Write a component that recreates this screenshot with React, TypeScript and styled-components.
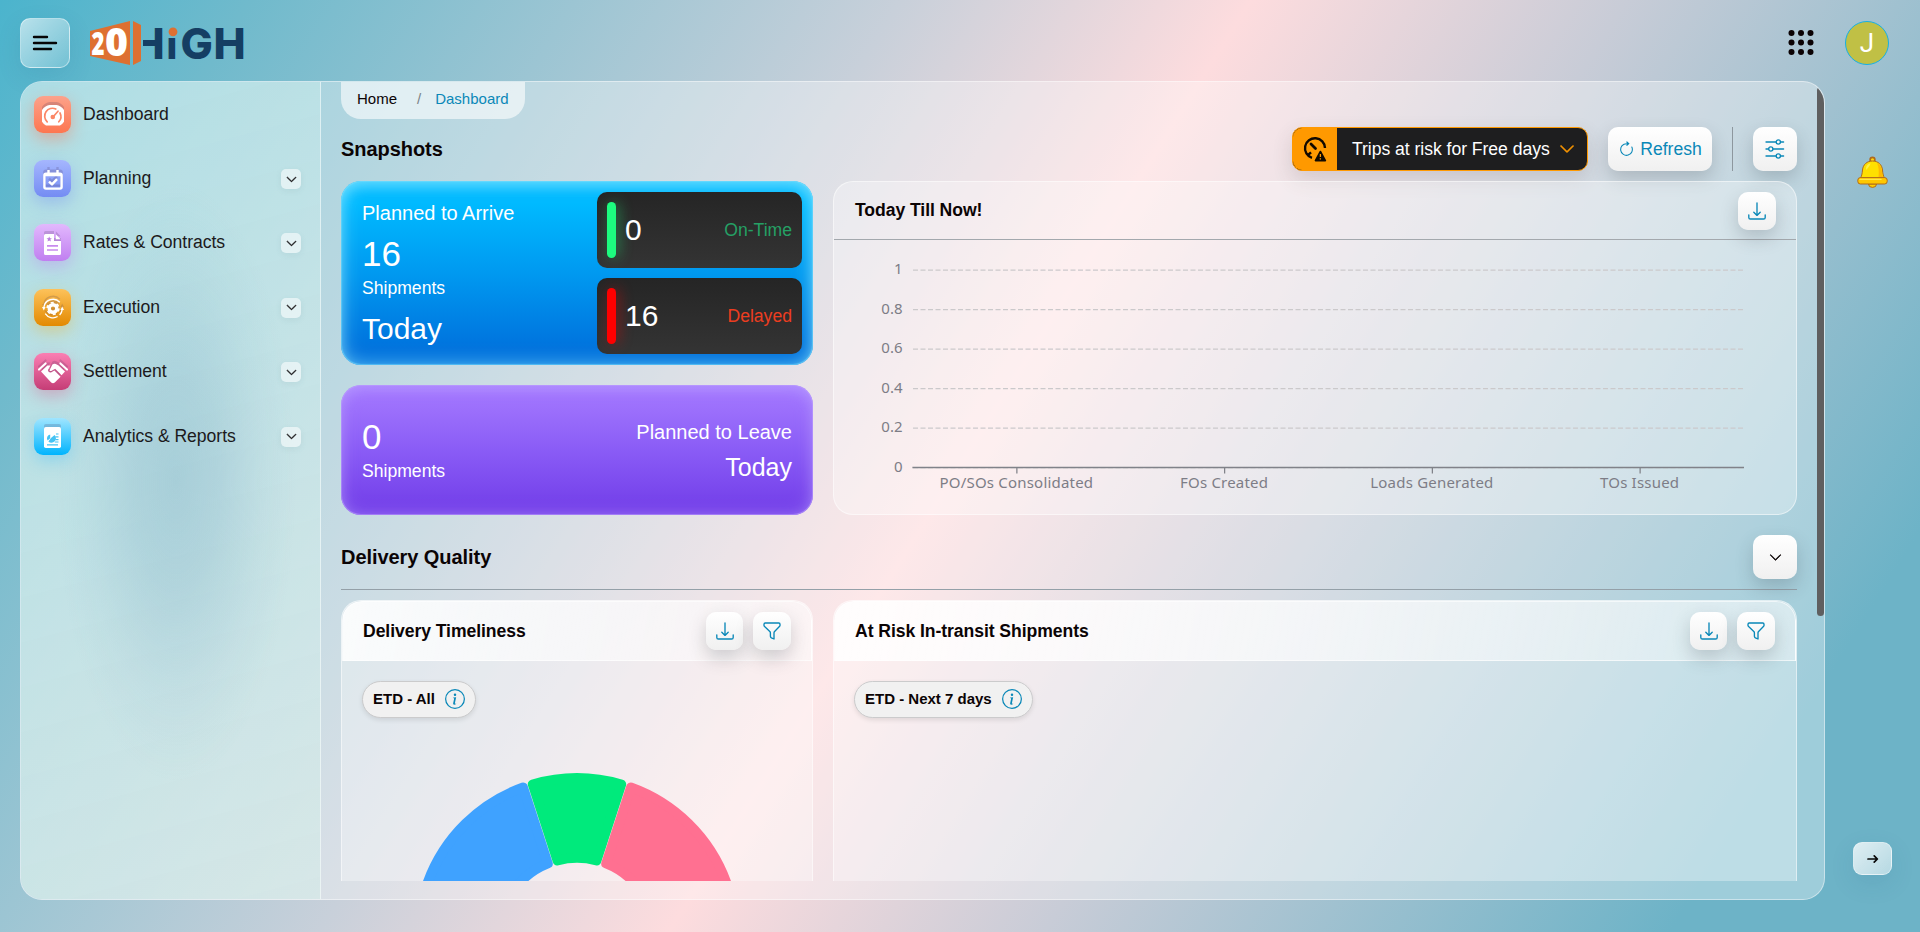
import React from "react";
import styled, { createGlobalStyle, css } from "styled-components";
import { BsArrowClockwise, BsChevronDown, BsInfoCircle } from "react-icons/bs";

const Global = createGlobalStyle`
  * { box-sizing: border-box; }
  html, body { margin: 0; }
  body {
    width: 100vw;
    height: 100vh;
    overflow: hidden;
    font-family: "Liberation Sans", Arial, sans-serif;
    color: #0b0405;
  }
`;

const accent = "#0a88b8";

const Page = styled.div`
  width: 1920px;
  height: 932px;
  display: flex;
  flex-direction: column;
  background: linear-gradient(122deg, #4bb4cd 0%, #70bacc 10%, #c8d0da 36%, #fddcde 50%, #c8ccd7 65%, #6db3c7 90%);
`;

const TopBar = styled.header`
  height: 81px;
  padding: 18px 31px 0 20px;
  display: flex;
  align-items: flex-start;
`;

const glassButton = css`
  display: grid;
  place-items: center;
  border: 1px solid rgba(255, 255, 255, 0.45);
  background: linear-gradient(135deg, rgba(255, 255, 255, 0.6), rgba(255, 255, 255, 0.15));
  box-shadow: 0 8px 24px rgba(31, 90, 135, 0.12);
`;

const MenuButton = styled.button`
  ${glassButton}
  width: 50px;
  height: 50px;
  padding: 0;
  border-radius: 10px;
`;

const LogoBox = styled.div`
  margin: 2px 0 0 19px;
  height: 46px;
  svg { overflow: visible; }
`;

const TopActions = styled.div`
  margin-left: auto;
  display: flex;
  align-items: center;
  gap: 31px;
  padding-top: 3px;
`;

const Avatar = styled.div`
  width: 44px;
  height: 44px;
  border-radius: 50%;
  border: 1px solid #17b0e4;
  background: #c0c045;
  color: #fff;
  display: grid;
  place-items: center;
  font: 400 26px Roboto, sans-serif;
`;

const Body = styled.div`
  display: flex;
  height: 819px;
  padding-left: 20px;
`;

const Panel = styled.div`
  width: 1805px;
  display: flex;
  border: 1px solid rgba(255, 255, 255, 0.45);
  border-radius: 22px;
  background: rgba(255, 255, 255, 0.34);
  overflow: hidden;
`;

const Sidebar = styled.nav`
  width: 300px;
  flex: none;
  padding: 0 19px 0 13px;
  border-right: 1px solid rgba(255, 255, 255, 0.5);
  background:
    radial-gradient(ellipse 120px 300px at 155px 400px, rgba(110, 165, 190, 0.32), rgba(110, 165, 190, 0.24) 35%, rgba(110, 165, 190, 0.08) 72%, rgba(110, 165, 190, 0) 100%),
    linear-gradient(165deg, rgba(200, 236, 236, 0.52), rgba(213, 236, 232, 0.6));
`;

const NavItem = styled.a`
  height: 64.4px;
  display: flex;
  align-items: center;
  gap: 12px;
  font-size: 17.6px;
  color: #1c1a1c;
`;

const NavLabel = styled.span`
  flex: 1;
  letter-spacing: -0.04px;
`;

const NavIcon = styled.span<{ $from: string; $to: string; $glow: string }>`
  width: 37px;
  height: 37px;
  border-radius: 9px;
  display: grid;
  place-items: center;
  color: #fff;
  background: linear-gradient(${(p) => p.$from}, ${(p) => p.$to});
  box-shadow: 0 6px 16px ${(p) => p.$glow};
  svg { margin-top: 3px; filter: drop-shadow(0 -3px 0 rgba(70, 50, 90, 0.2)); }
`;

const NavToggle = styled.span`
  width: 20px;
  height: 20px;
  margin-top: 1px;
  border-radius: 5px;
  display: grid;
  place-items: center;
  background: rgba(255, 255, 255, 0.55);
  box-shadow: 0 2px 6px rgba(60, 100, 120, 0.08);
  svg { stroke: currentColor; stroke-width: 1; }
`;

const Content = styled.main`
  width: 1496px;
  height: 799px;
  padding: 0 20px;
  overflow: hidden;
`;

const Track = styled.div`
  width: 7px;
  padding-top: 5px;
`;

const Thumb = styled.div`
  height: 529px;
  border-radius: 4px;
  background: #5f5f60;
`;

const Crumbs = styled.div`
  width: 184px;
  height: 37px;
  padding: 8px 16px 0;
  display: flex;
  font-size: 15px;
  line-height: 17px;
  border-radius: 0 0 20px 20px;
  background: rgba(255, 255, 255, 0.6);
`;

const CrumbSlash = styled.span`
  margin: 0 14px 0 20px;
  color: #7c8488;
`;

const CrumbHere = styled.span`
  color: ${accent};
`;

const HeadRow = styled.div`
  display: flex;
  align-items: center;
  justify-content: space-between;
  height: 44px;
  margin-top: 8px;
`;

const Heading = styled.h2`
  margin: 0;
  font-size: 20px;
  line-height: 24px;
  font-weight: 700;
  letter-spacing: -0.06px;
`;

const Tools = styled.div`
  display: flex;
  gap: 20px;
  height: 44px;
`;

const RiskPill = styled.div`
  width: 296px;
  display: flex;
  align-items: center;
  border: 1px solid #ff9900;
  border-radius: 10px;
  overflow: hidden;
  background: #1e1e1f;
  color: #fff;
  font-size: 17.6px;
  box-shadow: 0 8px 20px rgba(80, 60, 60, 0.16);
`;

const RiskIcon = styled.span`
  width: 44px;
  height: 44px;
  background: #ff9900;
  display: grid;
  place-items: center;
`;

const RiskText = styled.span`
  margin: 0 9px 0 15px;
  white-space: nowrap;
  letter-spacing: -0.04px;
`;

const RiskChevron = styled.span`
  color: #ff9900;
  display: flex;
  svg { stroke: currentColor; stroke-width: 0.7; }
`;

const WhiteButton = styled.button<{ $w: number; $h: number }>`
  width: ${(p) => p.$w}px;
  height: ${(p) => p.$h}px;
  flex: none;
  padding: 0;
  border: 0;
  border-radius: 10px;
  display: flex;
  align-items: center;
  justify-content: center;
  gap: 5px;
  font: 17.6px "Liberation Sans", Arial, sans-serif;
  color: ${accent};
  background: linear-gradient(#ffffff, #f0f0f0);
  box-shadow: 0 8px 18px rgba(50, 60, 70, 0.22);
`;

const Divider = styled.span`
  width: 1px;
  background: #8d979e;
`;

const Snapshots = styled.section`
  display: grid;
  grid-template-columns: 472px 964px;
  column-gap: 20px;
  margin-top: 10px;
  height: 334px;
`;

const Stack = styled.div`
  display: flex;
  flex-direction: column;
  gap: 20px;
`;

const ArriveCard = styled.div`
  height: 184px;
  padding: 11px;
  padding-left: 21px;
  display: flex;
  justify-content: space-between;
  color: #fff;
  border-radius: 20px;
  background: linear-gradient(#00baff 12%, #0099f0 50%, #0072dd 92%);
  box-shadow: inset 0 0 20px rgba(150, 235, 255, 0.6), inset 0 6px 12px rgba(150, 235, 255, 0.4), inset 0 0 1px 1px rgba(90, 205, 250, 0.6);
`;

const LeaveCard = styled.div`
  height: 130px;
  padding: 0 21px;
  display: flex;
  justify-content: space-between;
  color: #fff;
  border-radius: 20px;
  background: linear-gradient(#a67bff, #8a5cf6 50%, #733fe9 95%);
  box-shadow: inset 0 0 18px rgba(190, 165, 255, 0.45), inset 0 4px 12px rgba(190, 165, 255, 0.35), inset 0 0 0 1px rgba(190, 160, 255, 0.5);
`;

const Lines = styled.div<{ $top: number; $right?: boolean }>`
  padding-top: ${(p) => p.$top}px;
  text-align: ${(p) => (p.$right ? "right" : "left")};
`;

const Line = styled.div<{ $size: number; $lh: number }>`
  font-size: ${(p) => p.$size}px;
  line-height: ${(p) => p.$lh}px;
`;

const StatusStack = styled.div`
  display: flex;
  flex-direction: column;
  gap: 10px;
`;

const StatusBox = styled.div`
  width: 205px;
  height: 76px;
  padding: 0 10px;
  display: flex;
  align-items: center;
  border-radius: 10px;
  background: linear-gradient(#252525, #343434);
`;

const StatusBar = styled.span<{ $c: string }>`
  width: 9px;
  height: 56px;
  border-radius: 5px;
  background: ${(p) => p.$c};
  box-shadow: 3px 0 14px ${(p) => p.$c}66;
`;

const StatusCount = styled.span`
  flex: 1;
  padding-left: 9px;
  font-size: 30px;
`;

const StatusLabel = styled.span<{ $c: string }>`
  font-size: 17.6px;
  color: ${(p) => p.$c};
`;

const GlassCard = styled.div<{ $h: number }>`
  height: ${(p) => p.$h}px;
  border: 1px solid rgba(255, 255, 255, 0.5);
  border-radius: 20px;
  background: rgba(255, 255, 255, 0.32);
  overflow: hidden;
`;

const CardHead = styled.div<{ $solid?: boolean }>`
  height: ${(p) => (p.$solid ? 60 : 58)}px;
  padding: 0 20px;
  display: flex;
  align-items: center;
  gap: 10px;
  ${(p) =>
    p.$solid
      ? css`
          background: linear-gradient(100deg, rgba(255, 255, 255, 0.86), rgba(255, 255, 255, 0.35));
          border: 1px solid rgba(255, 255, 255, 0.6);
          border-radius: 20px 20px 0 0;
        `
      : css`
          padding-left: 21px;
          border-bottom: 1px solid #a3a8ad;
        `}
`;

const CardTitle = styled.h3`
  margin: 0 auto 0 0;
  font-size: 17.6px;
  font-weight: 700;
  letter-spacing: -0.07px;
`;

const QualityHead = styled(HeadRow)`
  height: 55px;
  margin-top: 20px;
  align-items: flex-start;
  border-bottom: 1px solid #94a0a8;
  ${Heading} { padding-top: 10px; }
  ${WhiteButton} { color: #0b0405; }
`;

const QualityGrid = styled.section`
  display: grid;
  grid-template-columns: 472px 964px;
  column-gap: 20px;
  margin-top: 10px;
`;

const Chip = styled.div`
  width: max-content;
  height: 37px;
  margin: 20px 0 0 20px;
  padding: 0 10px 2px;
  display: flex;
  align-items: center;
  gap: 10px;
  font-size: 15px;
  font-weight: 700;
  border: 1px solid #cbcbcc;
  border-radius: 19px;
  background: #f1f1f1;
  box-shadow: 0 2px 5px rgba(0, 0, 0, 0.1);
  svg { color: ${accent}; }
`;

const DonutBox = styled.div`
  margin-top: 53.5px;
  display: flex;
  justify-content: center;
`;

const Rail = styled.aside`
  width: 95px;
  padding: 75px 28px 0;
  display: flex;
  flex-direction: column;
  justify-content: space-between;
  align-items: flex-start;
`;

const ArrowButton = styled.button`
  ${glassButton}
  width: 39px;
  height: 33px;
  padding: 0;
  margin-bottom: 25px;
  border-radius: 9px;
  background: linear-gradient(135deg, rgba(255, 255, 255, 0.78), rgba(255, 255, 255, 0.5));
`;

const BellBox = styled.div`
  margin-left: 4px;
  height: 31px;
`;

const Logo = () => (
  <svg width="156" height="46" viewBox="89 20 156 46">
    <path d="M90 31 L130 21 V65 L90 56 Z" fill="#de7031" />
    <path d="M133 21 L141 25 V61 L133 65 Z" fill="#de7031" />
    <clipPath id="crossbar">
      <path d="M143 20 H166 V66 H143 Z" />
    </clipPath>
    <g fontFamily="Open Sans" fontWeight="800" fill="#fff">
      <text x="91.5" y="54.5" fontSize="32" textLength="13" lengthAdjust="spacingAndGlyphs">2</text>
      <text x="105" y="56" fontSize="38" textLength="23" lengthAdjust="spacingAndGlyphs">0</text>
    </g>
    <g fontFamily="Inter" fontWeight="800" fill="#153e63" fontSize="43">
      <text x="132.5" y="58.8" clipPath="url(#crossbar)">H</text>
      <text x="166.5" y="58.8" fontSize="38">ı</text>
      <text x="180.5" y="58.8">G</text>
      <text x="213.5" y="58.8">H</text>
    </g>
    <circle cx="173" cy="31.8" r="4.4" fill="#de7031" />
  </svg>
);

const MenuIcon = () => (
  <svg width="26" height="18" viewBox="0 0 26 18" stroke="#050505" strokeWidth="2.4" strokeLinecap="round">
    <path d="M2 3 H15 M2 9 H24 M2 15 H19" />
  </svg>
);

const AppsIcon = () => (
  <svg width="26" height="26" viewBox="0 0 26 26" fill="#0b0204">
    {[3, 12.5, 22].map((y) => [3.5, 13, 22.5].map((x) => <circle key={`${x}-${y}`} cx={x} cy={y} r="3" />))}
  </svg>
);

const DownloadIcon = () => (
  <svg width="18" height="18" viewBox="0 0 18 18" fill="none" stroke="currentColor" strokeWidth="1.35" strokeLinecap="round" strokeLinejoin="round">
    <path d="M9 1 V13 M5.8 10.2 L9 13.4 L12.2 10.2 M.8 12.8 V15.4 Q.8 17 2.4 17 H15.6 Q17.2 17 17.2 15.4 V12.8" />
  </svg>
);

const FunnelIcon = () => (
  <svg width="18" height="18" viewBox="0 0 18 18" fill="none" stroke="currentColor" strokeWidth="1.35" strokeLinejoin="round">
    <path d="M2.2 1 H15.8 Q17 1 17 2.2 V3.4 Q17 4 16.4 4.6 L11.6 9.4 Q11 10 11 10.8 V17 L8.4 15.8 Q7.4 15.2 7.4 14.2 V10.8 Q7.4 10 6.8 9.4 L1.6 4.6 Q1 4 1 3.4 V2.2 Q1 1 2.2 1 Z" />
  </svg>
);

const SlidersIcon = () => (
  <svg width="20" height="20" viewBox="0 0 20 20" fill="none" stroke="currentColor" strokeWidth="1.3" strokeLinecap="round">
    <path d="M1 3 H11 M15.6 3 H18.6 M1 10 H3.6 M8 10 H18.6 M1 17 H11 M15.6 17 H18.6" />
    <circle cx="13.3" cy="3" r="2.1" />
    <circle cx="5.8" cy="10" r="2.1" />
    <circle cx="13.3" cy="17" r="2.1" />
  </svg>
);

const RiskGauge = () => (
  <svg width="24" height="26" viewBox="0 0 24 26" fill="none" stroke="#120a00" strokeWidth="2.4">
    <path d="M9 21.8 A10 10 0 1 1 22 12" />
    <path d="M8 8 L12.5 12.5" strokeWidth="2.8" strokeLinecap="round" />
    <path d="M5 19 L8 16.4" />
    <path d="M17.4 15.5 L22.4 24.6 H12.4 Z" fill="#120a00" strokeWidth="1.6" strokeLinejoin="round" />
    <path d="M17.4 18 V21 M17.4 22.2 V23.4" stroke="#ff9900" strokeWidth="1.3" />
  </svg>
);

const GaugeIcon = () => (
  <svg width="22" height="21" viewBox="0 0 22 21">
    <path d="M11 0 A11 11 0 0 1 18 20.5 H4 A11 11 0 0 1 11 0 Z" fill="#fff" />
    <g fill="none" stroke="#fb8767" strokeWidth="1.7" strokeLinecap="round">
      <path d="M5.2 16.8 A7.8 7.8 0 0 1 13.8 4" />
      <path d="M18 8 A7.8 7.8 0 0 1 16.8 16.8" />
      <path d="M11 12 L16 6.2" />
    </g>
    <circle cx="10.8" cy="12" r="2.3" fill="#fb8767" />
  </svg>
);

const CalendarIcon = () => (
  <svg width="20" height="20" viewBox="0 0 20 20" fill="none" stroke="#fff" strokeWidth="2.4" strokeLinejoin="round">
    <rect x="1.4" y="3.6" width="17.2" height="15" rx="1.6" />
    <path d="M5.5 0 V6 M14.5 0 V6 M1.4 5 H18.6" />
    <path d="M6 11.6 L9 14.4 L14 9.2" />
  </svg>
);

const ContractIcon = () => (
  <svg width="17" height="21" viewBox="0 0 17 21">
    <path d="M1.5 0 H10 V7 H17 V19.5 Q17 21 15.5 21 H1.5 Q0 21 0 19.5 V1.5 Q0 0 1.5 0 Z M11.8 .3 L16.6 5.2 H11.8 Z" fill="#fff" />
    <path d="M5.2 2.4 L6 4.2 L7.9 4.3 L6.4 5.6 L6.9 7.5 L5.2 6.4 L3.5 7.5 L4 5.6 L2.5 4.3 L4.4 4.2 Z" fill="#b87ee0" />
    <path d="M3 11.8 H14 M3 16 H14" stroke="#c78bee" strokeWidth="1.7" />
  </svg>
);

const ExecutionIcon = () => (
  <svg width="22" height="21" viewBox="0 0 22 21" fill="none" stroke="#fff">
    <path d="M1.8 9.5 A9.3 9.3 0 0 1 17.8 4.2 M20.2 11.5 A9.3 9.3 0 0 1 17.6 17" strokeWidth="1.4" />
    <path d="M3.2 15.6 A9.3 9.3 0 0 0 15.6 18.6" strokeWidth="1.2" />
    <circle cx="11" cy="10.5" r="3.8" strokeWidth="3.4" />
    <circle cx="11" cy="10.5" r="5.9" strokeWidth="1.6" strokeDasharray="3.1 3.08" />
    <path d="M0 9 H3.6 L1.8 12.4 Z M18.4 12 H22 L20.2 8.6 Z" fill="#fff" stroke="none" />
  </svg>
);

const HandshakeIcon = () => (
  <svg width="30" height="22" viewBox="0 0 30 22" fill="none" stroke="#fff" strokeLinecap="round">
    <path d="M1 7.6 L7.6 1.4 M29 7.6 L22.4 1.4" strokeWidth="2" />
    <path
      d="M3 9.6 L9.4 3.4 H12.4 L10 8 Q10 10.6 13 10.4 L16.4 8.6 L22.6 14.8 L16.8 20.4 Q15 22 13.2 20.4 Z"
      fill="#fff"
      stroke="none"
    />
    <path
      d="M14.4 2.4 Q16 1.6 17.8 2 L20.6 3.4 L27 9.6 L23.6 13.2 L17.2 6.8 L13.2 9 Q11.6 9.4 11.6 8.2 Z"
      fill="#fff"
      stroke="none"
    />
  </svg>
);

const ReportIcon = () => (
  <svg width="17" height="21" viewBox="0 0 17 21">
    <rect width="17" height="21" rx="1.8" fill="#fff" />
    <path d="M6.2 7.5 V11.3 L3.6 13.6 A4 4 0 0 1 6.2 7.5 Z M7 11 L10.6 8 A4 4 0 0 1 4.4 14.4 Z" fill="#45c3f4" />
    <path d="M12 7 H14.5 M11.5 9.8 H14.5 M11.5 12.6 H14.5 M10.8 15 H14.5 M3 17.8 H14" stroke="#45c3f4" strokeWidth="1.2" />
  </svg>
);

const Bell = () => (
  <svg width="31" height="32" viewBox="0 0 31 32" strokeLinejoin="round">
    <circle cx="15.5" cy="3.8" r="2.4" fill="#ffd60a" stroke="#b06a1c" strokeWidth="1.6" />
    <path d="M11.5 28 a4 3.4 0 0 0 8 0 Z" fill="#ffd000" stroke="#b06a1c" />
    <path d="M15.5 5 C21 5 25 8.5 25.5 14 C25.8 18 26.5 20.5 27.6 22 H3.4 C4.5 20.5 5.2 18 5.5 14 C6 8.5 10 5 15.5 5 Z" fill="#ffe000" stroke="#b06a1c" />
    <path d="M20 7 C23.5 9 24.6 11.5 24.8 15 C25 18 25.6 20 26.5 21.4 H21.5 C22 16 22 11 20 7 Z" fill="#ffb900" />
    <path d="M9.2 11 C10 8.6 11.5 7.6 13.5 7.2 C13 9.5 11.5 11.5 9 14 Z" fill="#fff04a" />
    <rect x=".8" y="21.6" width="29.4" height="6.4" rx="2.6" fill="#ffc800" stroke="#b06a1c" />
    <path d="M3 23.4 H24" stroke="#ffe84a" strokeWidth="1.4" strokeLinecap="round" />
  </svg>
);

const ArrowIcon = () => (
  <svg width="12" height="10" viewBox="0 0 12 10" fill="none" stroke="#080808" strokeWidth="1.7" strokeLinecap="round" strokeLinejoin="round">
    <path d="M1 5 H10.2 M7.2 1.8 L10.4 5 L7.2 8.2" />
  </svg>
);

const plot = { left: 79, right: 910, top: 30, base: 227.5 };
const categories = ["PO/SOs Consolidated", "FOs Created", "Loads Generated", "TOs Issued"];

const BarChart = () => {
  const step = (plot.base - plot.top) / 5;
  const band = (plot.right - plot.left) / categories.length;
  return (
    <svg width="962" height="274" fontFamily="Noto Sans" fontSize="15" fill="#7d7d86">
      {["0", "0.2", "0.4", "0.6", "0.8", "1"].map((label, i) => {
        const y = plot.base - i * step;
        return (
          <g key={label}>
            <text x="68.5" y={y + 4} textAnchor="end">{label}</text>
            <path d={`M${plot.left} ${y} H${plot.right}`} stroke="#cbc9cb" strokeWidth="1.25" strokeDasharray="5 2.5" />
          </g>
        );
      })}
      <path d={`M${plot.left - 0.6} ${plot.base} H${plot.right}`} stroke="#808289" strokeWidth="1.4" />
      {categories.map((name, i) => {
        const x = plot.left + band * (i + 0.5);
        return (
          <g key={name}>
            <path d={`M${x} ${plot.base} v6`} stroke="#808289" strokeWidth="1.25" />
            <text x={x - 0.5} y="248" textAnchor="middle" letterSpacing="0.2">{name}</text>
          </g>
        );
      })}
    </svg>
  );
};

const slice = (from: number, to: number, outer: number, inner: number, round: number) => {
  const at = (deg: number, r: number, side: number) => {
    const a = (deg * Math.PI) / 180 + side * Math.asin(round / r);
    return `${(165 + r * Math.sin(a)).toFixed(2)} ${(165 - r * Math.cos(a)).toFixed(2)}`;
  };
  const ro = outer - round;
  const ri = inner + round;
  return `M${at(from, ro, 1)} A${ro} ${ro} 0 0 1 ${at(to, ro, -1)} L${at(to, ri, -1)} A${ri} ${ri} 0 0 0 ${at(from, ri, 1)} Z`;
};

const slices = [
  { from: -126, to: -18, color: "#3fa2ff" },
  { from: -18, to: 18, color: "#00ea7c" },
  { from: 18, to: 126, color: "#ff7091" },
];

const Donut = () => (
  <svg width="330" height="330">
    {slices.map((s) => (
      <path key={s.color} d={slice(s.from, s.to, 164, 74, 5)} fill={s.color} stroke={s.color} strokeWidth="9.7" strokeLinejoin="round" />
    ))}
  </svg>
);

const nav = [
  { label: "Dashboard", icon: <GaugeIcon />, from: "#fca28b", to: "#fd7650", glow: "rgba(253,118,80,.45)" },
  { label: "Planning", icon: <CalendarIcon />, from: "#a5b6fe", to: "#748cf3", glow: "rgba(116,140,243,.4)", open: true },
  { label: "Rates & Contracts", icon: <ContractIcon />, from: "#e2b8fd", to: "#c07ff0", glow: "rgba(192,127,240,.4)", open: true },
  { label: "Execution", icon: <ExecutionIcon />, from: "#fdc25a", to: "#e38900", glow: "rgba(240,180,40,.4)", open: true },
  { label: "Settlement", icon: <HandshakeIcon />, from: "#fb7fb3", to: "#c53d76", glow: "rgba(220,90,140,.4)", open: true },
  { label: "Analytics & Reports", icon: <ReportIcon />, from: "#a0e5ff", to: "#00b4fd", glow: "rgba(60,190,250,.35)", open: true },
];

const QualityCard = ({ title, chip, children }: { title: string; chip: string; children?: React.ReactNode }) => (
  <GlassCard $h={500}>
    <CardHead $solid>
      <CardTitle>{title}</CardTitle>
      <WhiteButton $w={37} $h={38}><DownloadIcon /></WhiteButton>
      <WhiteButton $w={38} $h={38}><FunnelIcon /></WhiteButton>
    </CardHead>
    <Chip>
      {chip}
      <BsInfoCircle size={20} />
    </Chip>
    {children}
  </GlassCard>
);

export default function App() {
  return (
    <Page>
      <Global />
      <TopBar>
        <MenuButton><MenuIcon /></MenuButton>
        <LogoBox><Logo /></LogoBox>
        <TopActions>
          <AppsIcon />
          <Avatar>J</Avatar>
        </TopActions>
      </TopBar>
      <Body>
        <Panel>
          <Sidebar>
            {nav.map((item) => (
              <NavItem key={item.label}>
                <NavIcon $from={item.from} $to={item.to} $glow={item.glow}>{item.icon}</NavIcon>
                <NavLabel>{item.label}</NavLabel>
                {item.open && <NavToggle><BsChevronDown size={11} /></NavToggle>}
              </NavItem>
            ))}
          </Sidebar>
          <Content>
            <Crumbs>
              <span>Home</span>
              <CrumbSlash>/</CrumbSlash>
              <CrumbHere>Dashboard</CrumbHere>
            </Crumbs>
            <HeadRow>
              <Heading>Snapshots</Heading>
              <Tools>
                <RiskPill>
                  <RiskIcon><RiskGauge /></RiskIcon>
                  <RiskText>Trips at risk for Free days</RiskText>
                  <RiskChevron><BsChevronDown size={16} /></RiskChevron>
                </RiskPill>
                <WhiteButton $w={104} $h={44}><BsArrowClockwise size={17} />Refresh</WhiteButton>
                <Divider />
                <WhiteButton $w={44} $h={44}><SlidersIcon /></WhiteButton>
              </Tools>
            </HeadRow>
            <Snapshots>
              <Stack>
                <ArriveCard>
                  <Lines $top={9}>
                    <Line $size={20} $lh={24}>Planned to Arrive</Line>
                    <Line $size={35} $lh={58}>16</Line>
                    <Line $size={17.6} $lh={11}>Shipments</Line>
                    <Line $size={30} $lh={70}>Today</Line>
                  </Lines>
                  <StatusStack>
                    <StatusBox>
                      <StatusBar $c="#1dfc7f" />
                      <StatusCount>0</StatusCount>
                      <StatusLabel $c="#25a065">On-Time</StatusLabel>
                    </StatusBox>
                    <StatusBox>
                      <StatusBar $c="#ff0000" />
                      <StatusCount>16</StatusCount>
                      <StatusLabel $c="#ec3d20">Delayed</StatusLabel>
                    </StatusBox>
                  </StatusStack>
                </ArriveCard>
                <LeaveCard>
                  <Lines $top={29}>
                    <Line $size={35} $lh={46}>0</Line>
                    <Line $size={17.6} $lh={22}>Shipments</Line>
                  </Lines>
                  <Lines $top={34} $right>
                    <Line $size={20} $lh={26}>Planned to Leave</Line>
                    <Line $size={25} $lh={45}>Today</Line>
                  </Lines>
                </LeaveCard>
              </Stack>
              <GlassCard $h={334}>
                <CardHead>
                  <CardTitle>Today Till Now!</CardTitle>
                  <WhiteButton $w={38} $h={38}><DownloadIcon /></WhiteButton>
                </CardHead>
                <BarChart />
              </GlassCard>
            </Snapshots>
            <QualityHead>
              <Heading>Delivery Quality</Heading>
              <WhiteButton $w={44} $h={44}><BsChevronDown size={13} strokeWidth={0.8} /></WhiteButton>
            </QualityHead>
            <QualityGrid>
              <QualityCard title="Delivery Timeliness" chip="ETD - All">
                <DonutBox><Donut /></DonutBox>
              </QualityCard>
              <QualityCard title="At Risk In-transit Shipments" chip="ETD - Next 7 days" />
            </QualityGrid>
          </Content>
          <Track><Thumb /></Track>
        </Panel>
        <Rail>
          <BellBox><Bell /></BellBox>
          <ArrowButton><ArrowIcon /></ArrowButton>
        </Rail>
      </Body>
    </Page>
  );
}
